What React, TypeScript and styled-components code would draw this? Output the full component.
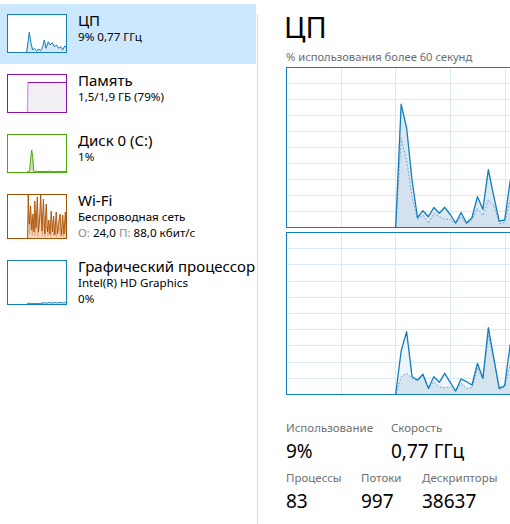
import React from 'react';
import styled, { createGlobalStyle } from 'styled-components';

const Global = createGlobalStyle`
  html, body { margin: 0; padding: 0; background: #fff; }
  body { font-family: "Noto Sans", "Open Sans", sans-serif; color: #000; overflow: hidden; }
`;

const Root = styled.div`
  display: flex;
  width: 510px;
  height: 524px;
  overflow: hidden;
  background: #fff;
`;

const Sidebar = styled.div`
  width: 257px;
  flex: none;
  padding-top: 4px;
  display: flex;
  flex-direction: column;
`;

const Item = styled.div<{ $selected?: boolean; $tall?: boolean }>`
  display: flex;
  align-items: flex-start;
  gap: 11px;
  width: 256px;
  height: ${(p) => (p.$tall ? 66 : 60)}px;
  box-sizing: border-box;
  padding: 7px 0 0 7px;
  background: ${(p) => (p.$selected ? '#cce8ff' : 'transparent')};
`;

const Thumb = styled.div<{ $color: string; $tall?: boolean }>`
  flex: none;
  width: 60px;
  height: ${(p) => (p.$tall ? 45 : 39)}px;
  margin-top: 3px;
  box-sizing: border-box;
  border: 1px solid ${(p) => p.$color};
  background: #fff;
  svg { display: block; width: 58px; height: ${(p) => (p.$tall ? 43 : 37)}px; }
`;

const ItemText = styled.div`
  flex: 1;
  min-width: 0;
  overflow: hidden;
  white-space: nowrap;
`;

const ItemTitle = styled.div`
  font-size: 15px;
  line-height: 18px;
  color: #000;
`;

const ItemSub = styled.div`
  font-size: 11.6px;
  line-height: 16px;
  color: #000;
`;

const Dim = styled.span`
  color: #8a8a8a;
`;

const Main = styled.div`
  flex: 1;
  min-width: 0;
  margin-top: 14px;
  border-left: 1px solid #dadada;
  padding-left: 28px;
  display: flex;
  flex-direction: column;
`;

const Heading = styled.div`
  margin-top: -4px;
  margin-left: -2px;
  font-size: 29px;
  line-height: 33px;
  color: #000;
`;

const Caption = styled.div`
  margin-top: 6px;
  font-size: 11.2px;
  line-height: 15px;
  color: #6b6b6b;
  white-space: nowrap;
`;

const ChartFrame = styled.div<{ $h: number; $top: number }>`
  flex: none;
  margin-top: ${(p) => p.$top}px;
  width: 560px;
  height: ${(p) => p.$h}px;
  box-sizing: border-box;
  border: 1px solid #117dbb;
  background: #fff;
  svg { display: block; width: 558px; height: ${(p) => p.$h - 2}px; }
`;

const Stats = styled.div`
  margin-top: 25px;
  display: flex;
  flex-direction: column;
  gap: 6px;
`;

const StatRow = styled.div`
  display: flex;
`;

const Stat = styled.div<{ $w?: number }>`
  flex: none;
  width: ${(p) => (p.$w ? `${p.$w}px` : 'auto')};
  white-space: nowrap;
`;

const StatLabel = styled.div`
  font-size: 11.5px;
  line-height: 16px;
  color: #707070;
`;

const StatValue = styled.div`
  margin-top: 2px;
  font-size: 19px;
  line-height: 26px;
  color: #000;
`;

type Pt = [number, number];

const toStr = (pts: Pt[]) => pts.map((p) => `${p[0]},${p[1]}`).join(' ');
const area = (pts: Pt[], bottom: number) =>
  toStr([[pts[0][0], bottom], ...pts, [pts[pts.length - 1][0], bottom]]);

/* ---------- big charts ---------- */

const seq = (ys: number[]): Pt[] => ys.map((y, i) => [109.7 + 5.45 * i, y]);

const c1Solid = seq([160, 37.2, 60.8, 113, 150.5, 143.7, 149.7, 140.5, 146.3, 140.3, 147.5, 156, 145.5, 156, 150.5, 129.7, 142.3, 102.7, 129.3, 154.2, 153, 114, 140, 150]);
const c1Dash = seq([160, 71.3, 93, 129.7, 152.3, 148, 156.3, 146.3, 149.7, 152.3, 152.3, 157, 149.7, 157, 153, 141.3, 148.7, 133, 138, 156.3, 155.7, 133, 148, 154]);
const c2Solid = seq([162, 119, 99.7, 144.7, 148, 142.3, 156.3, 144.7, 150.3, 141.3, 150.3, 159, 147, 149.7, 153, 131.3, 146.3, 95.7, 126.3, 156.3, 153.7, 113, 140, 150]);
const c2Dash = seq([162, 144.7, 141.3, 146.3, 149, 143.7, 157, 149.7, 154.7, 155.7, 154.7, 159.7, 151.3, 156.3, 155.7, 135.7, 147, 103, 126.3, 158, 154.7, 133, 148, 154]);

function BigChart({ h, top, solid, dash, solidFill, dashFill }: { h: number; top: number; solid: Pt[]; dash: Pt[]; solidFill: string; dashFill: string }) {
  const bottom = h - 1;
  const rowH = (h - 1) / 10;
  const hl = Array.from({ length: 9 }, (_, i) => Math.round(rowH * (i + 1)) + 0.5);
  const vl = Array.from({ length: 9 }, (_, i) => Math.round(54.67 * (i + 1)) + 0.5);
  return (
    <ChartFrame $h={h} $top={top}>
      <svg viewBox={`1 1 558 ${h - 2}`} preserveAspectRatio="none">
        <g stroke="#d9eaf5" strokeWidth="1" shapeRendering="crispEdges">
          {hl.map((y) => <line key={`h${y}`} x1="0" x2="560" y1={y} y2={y} />)}
          {vl.map((x) => <line key={`v${x}`} x1={x} x2={x} y1="0" y2={h} />)}
        </g>
        <polygon points={area(solid, bottom)} fill={solidFill} />
        <polygon points={area(dash, bottom)} fill={dashFill} />
        <polyline points={toStr(dash)} fill="none" stroke="#6fa9d3" strokeWidth="1" strokeDasharray="2 1.5" />
        <polyline points={toStr(solid)} fill="none" stroke="#117dbb" strokeWidth="1.3" strokeLinejoin="round" />
      </svg>
    </ChartFrame>
  );
}

/* ---------- thumbnails ---------- */

const cpuPts: Pt[] = [[19.7, 38], [22.3, 18.3], [24, 29.3], [25.7, 36], [27.3, 34.3], [29.7, 36.7], [32, 35.3], [33.7, 36.7], [35.7, 32.7], [37.3, 26], [39, 34.3], [41.3, 27.7], [43, 31], [45.3, 28.7], [47.3, 32.7], [49.7, 31], [51.7, 34.3], [53.7, 32.7], [55.7, 36], [57.7, 32], [59.3, 33.3]];

function CpuThumb() {
  return (
    <svg viewBox="1 1 58 37" preserveAspectRatio="none">
      <polygon points={area(cpuPts, 38)} fill="#d6e8f4" />
      <polyline points={toStr(cpuPts)} fill="none" stroke="#117dbb" strokeWidth="1" />
    </svg>
  );
}

function MemThumb() {
  return (
    <svg viewBox="1 1 58 37" preserveAspectRatio="none">
      <defs>
        <linearGradient id="memedge" x1="0" x2="1" y1="0" y2="0">
          <stop offset="0" stopColor="#c58fd6" />
          <stop offset="1" stopColor="#f2eff4" />
        </linearGradient>
      </defs>
      <polygon points="20.3,38 20.8,8.5 59,8.5 59,38" fill="#f2eff4" />
      <polygon points="20.3,38 20.8,8.5 22,8.5 21.5,38" fill="url(#memedge)" />
      <polyline points="20.3,38 20.8,8.5 22.5,8.5" fill="none" stroke="#c58fd6" strokeWidth="0.8" />
      <line x1="20.8" x2="59" y1="8.5" y2="8.5" stroke="#8b12ae" strokeWidth="1" />
    </svg>
  );
}

const diskPts: Pt[] = [[20, 38], [21.7, 37.6], [22.7, 36], [23.7, 24.3], [24.7, 16], [25.7, 22.7], [26.7, 37], [27.7, 37.6], [29.7, 37], [30.7, 37.6], [41.5, 37.6], [42.3, 36.5], [43.2, 37.6], [52.5, 37.6], [53.2, 36.8], [54, 37.6], [59, 37.6]];

function DiskThumb() {
  return (
    <svg viewBox="1 1 58 37" preserveAspectRatio="none">
      <polygon points={area(diskPts, 38)} fill="#c9e6b4" />
      <polyline points={toStr(diskPts)} fill="none" stroke="#4da60c" strokeWidth="1" />
    </svg>
  );
}

const wifiSolid: Pt[] = [[20.6, 44], [21.2, 1], [22.4, 30], [23.6, 12], [24.8, 36], [26, 20], [27, 38], [27.8, 7], [29, 34], [30.3, 3], [31.5, 38], [32.6, 24], [33.7, 1], [35, 37], [36.4, 5], [37.8, 40], [39.2, 10], [40.6, 38], [41.8, 26], [43, 40], [44.2, 17], [45.5, 38], [46.6, 22], [47.8, 41], [49.2, 18], [50.6, 40], [51.8, 28], [53.1, 20], [54.4, 41], [55.7, 21], [57, 40], [58.3, 18], [59.4, 36]];
const wifiDash: Pt[] = [[20.6, 44], [21.4, 20], [22.8, 40], [24, 26], [25.3, 42], [26.6, 30], [28, 42], [29.4, 24], [30.8, 43], [32.2, 30], [33.7, 20], [35.1, 42], [36.6, 28], [38, 43], [39.5, 32], [41, 42], [42.4, 34], [43.8, 43], [45.2, 30], [46.6, 42], [48, 36], [49.4, 43], [50.8, 38], [52.3, 34], [53.7, 43], [55.1, 36], [56.5, 43], [58, 35], [59.4, 42]];

function WifiThumb() {
  return (
    <svg viewBox="1 1 58 43" preserveAspectRatio="none">
      <polygon points={area(wifiSolid, 44)} fill="#e9b890" />
      <polygon points={area(wifiDash, 44)} fill="#f6d9c2" />
      <polyline points={toStr(wifiDash)} fill="none" stroke="#e2874a" strokeWidth="0.8" strokeDasharray="1 1" />
      <polyline points={toStr(wifiSolid)} fill="none" stroke="#a74f01" strokeWidth="0.9" />
    </svg>
  );
}

const gpuPts: Pt[] = [[20, 43.6], [21.8, 43.6], [22.3, 42.6], [22.8, 43.6], [34.5, 43.6], [35, 42.5], [35.6, 43.6], [36.8, 42.2], [38, 43.6], [39, 42.4], [40.3, 43.6], [41.3, 42.3], [42.4, 43], [43.5, 41.8], [44.7, 43.6], [45.8, 42.4], [47, 43], [48.2, 42.2], [49.3, 43], [50.5, 42.4], [51.7, 43], [53, 42.2], [54.2, 43], [55.5, 42.5], [56.6, 43], [57.5, 42.3], [59, 42.8]];

function GpuThumb() {
  return (
    <svg viewBox="1 1 58 43" preserveAspectRatio="none">
      <polygon points={area(gpuPts, 44)} fill="#d6e8f4" />
      <polyline points={toStr(gpuPts)} fill="none" stroke="#117dbb" strokeWidth="0.9" />
    </svg>
  );
}

type SideItem = {
  key: string;
  title: string;
  lines: React.ReactNode[];
  color: string;
  selected?: boolean;
  tall?: boolean;
  graph: React.ReactNode;
};

const items: SideItem[] = [
  { key: 'cpu', title: 'ЦП', lines: ['9% 0,77 ГГц'], color: '#117dbb', selected: true, graph: <CpuThumb /> },
  { key: 'mem', title: 'Память', lines: ['1,5/1,9 ГБ (79%)'], color: '#8b12ae', graph: <MemThumb /> },
  { key: 'disk', title: 'Диск 0 (C:)', lines: ['1%'], color: '#4da60c', graph: <DiskThumb /> },
  {
    key: 'wifi',
    title: 'Wi-Fi',
    lines: [
      'Беспроводная сеть',
      <>
        <Dim>О:</Dim> 24,0 <Dim>П:</Dim> 88,0 кбит/с
      </>,
    ],
    color: '#a74f01',
    tall: true,
    graph: <WifiThumb />,
  },
  { key: 'gpu', title: 'Графический процессор 0', lines: ['Intel(R) HD Graphics', '0%'], color: '#117dbb', tall: true, graph: <GpuThumb /> },
];

export default function App() {
  return (
    <Root>
      <Global />
      <Sidebar>
        {items.map((it) => (
          <Item key={it.key} $selected={it.selected} $tall={it.tall}>
            <Thumb $color={it.color} $tall={it.tall}>
              {it.graph}
            </Thumb>
            <ItemText>
              <ItemTitle>{it.title}</ItemTitle>
              {it.lines.map((l, i) => (
                <ItemSub key={i}>{l}</ItemSub>
              ))}
            </ItemText>
          </Item>
        ))}
      </Sidebar>
      <Main>
        <Heading>ЦП</Heading>
        <Caption>% использования более 60 секунд</Caption>
        <BigChart h={161} top={3} solid={c1Solid} dash={c1Dash} solidFill="#dce8f2" dashFill="#d3e2ee" />
        <BigChart h={163} top={4} solid={c2Solid} dash={c2Dash} solidFill="#eef5fa" dashFill="#d6e4ef" />
        <Stats>
          <StatRow>
            <Stat $w={105}>
              <StatLabel>Использование</StatLabel>
              <StatValue>9%</StatValue>
            </Stat>
            <Stat>
              <StatLabel>Скорость</StatLabel>
              <StatValue>0,77 ГГц</StatValue>
            </Stat>
          </StatRow>
          <StatRow>
            <Stat $w={75}>
              <StatLabel>Процессы</StatLabel>
              <StatValue>83</StatValue>
            </Stat>
            <Stat $w={61}>
              <StatLabel>Потоки</StatLabel>
              <StatValue>997</StatValue>
            </Stat>
            <Stat>
              <StatLabel>Дескрипторы</StatLabel>
              <StatValue>38637</StatValue>
            </Stat>
          </StatRow>
        </Stats>
      </Main>
    </Root>
  );
}
